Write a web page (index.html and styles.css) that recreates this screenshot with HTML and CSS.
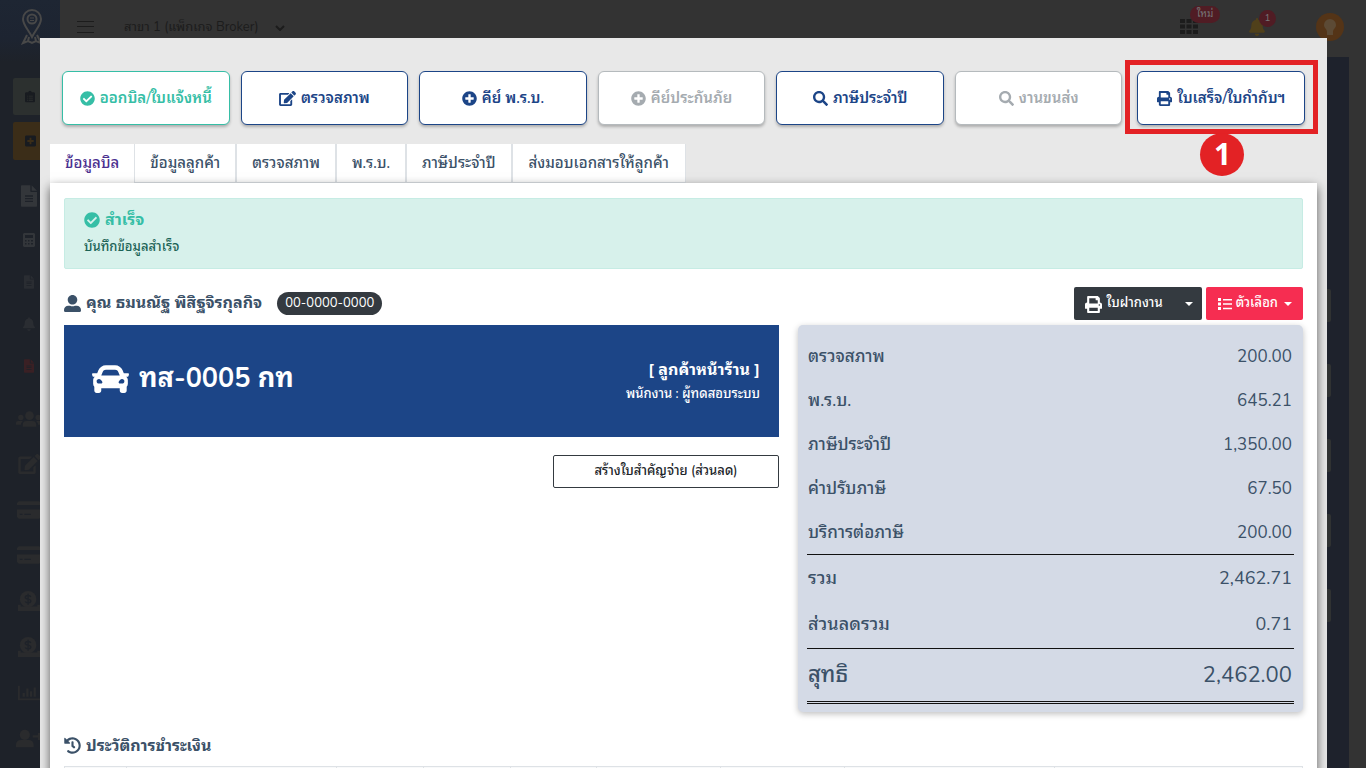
FILE: index.html
```html
<!DOCTYPE html>
<html lang="th">
<head>
<meta charset="utf-8">
<meta name="viewport" content="width=device-width, initial-scale=1">
<title>ข้อมูลบิล</title>
<link rel="stylesheet" href="styles.css">
</head>
<body>
<svg class="sprite" aria-hidden="true">
  <symbol id="check" viewBox="0 0 512 512"><path d="M504 256c0 136.967-111.033 248-248 248S8 392.967 8 256 119.033 8 256 8s248 111.033 248 248zM227.314 387.314l184-184c6.248-6.248 6.248-16.379 0-22.627l-22.627-22.627c-6.248-6.249-16.379-6.249-22.628 0L216 308.118l-70.059-70.059c-6.248-6.248-16.379-6.248-22.628 0l-22.627 22.627c-6.248 6.248-6.248 16.379 0 22.627l104 104c6.249 6.249 16.379 6.249 22.628.001z"/></symbol>
  <symbol id="plus" viewBox="0 0 512 512"><path d="M256 8C119 8 8 119 8 256s111 248 248 248 248-111 248-248S393 8 256 8zm144 276c0 6.600-5.400 12-12 12h-92v92c0 6.600-5.400 12-12 12h-56c-6.600 0-12-5.400-12-12v-92h-92c-6.600 0-12-5.400-12-12v-56c0-6.600 5.400-12 12-12h92v-92c0-6.600 5.400-12 12-12h56c6.600 0 12 5.400 12 12v92h92c6.600 0 12 5.400 12 12v56z"/></symbol>
  <symbol id="search" viewBox="0 0 512 512"><path d="M505 442.700L405.300 343c-4.500-4.500-10.600-7-17-7H372c27.600-35.300 44-79.700 44-128C416 93.100 322.900 0 208 0S0 93.100 0 208s93.100 208 208 208c48.300 0 92.700-16.400 128-44v16.300c0 6.400 2.500 12.500 7 17l99.700 99.700c9.400 9.400 24.600 9.400 33.900 0l28.300-28.300c9.400-9.400 9.400-24.600.1-34zM208 336c-70.700 0-128-57.200-128-128 0-70.700 57.200-128 128-128 70.700 0 128 57.200 128 128 0 70.700-57.200 128-128 128z"/></symbol>
  <symbol id="edit" viewBox="0 0 576 512"><path d="M402.600 83.200l90.200 90.200c3.800 3.800 3.800 10 0 13.800L274.400 405.600l-92.800 10.300c-12.400 1.400-22.900-9.100-21.500-21.500l10.300-92.800L388.800 83.200c3.800-3.800 10-3.800 13.800 0zm162-22.900l-48.800-48.800c-15.200-15.200-39.900-15.200-55.200 0l-35.400 35.400c-3.800 3.800-3.800 10 0 13.800l90.200 90.200c3.800 3.800 10 3.800 13.800 0l35.400-35.400c15.200-15.300 15.200-40 0-55.200zM384 346.200V448H64V128h229.800c3.200 0 6.200-1.300 8.500-3.500l40-40c7.600-7.600 2.200-20.500-8.500-20.500H48C21.500 64 0 85.500 0 112v352c0 26.500 21.500 48 48 48h352c26.500 0 48-21.500 48-48V306.200c0-10.700-12.900-16-20.500-8.500l-40 40c-2.200 2.300-3.500 5.300-3.500 8.500z"/></symbol>
  <symbol id="print" viewBox="0 0 512 512"><path d="M448 192V77.250c0-8.490-3.370-16.620-9.370-22.630L393.370 9.370c-6-6-14.140-9.370-22.630-9.370H96C78.330 0 64 14.330 64 32v160c-35.350 0-64 28.650-64 64v112c0 8.840 7.160 16 16 16h48v96c0 17.670 14.330 32 32 32h320c17.670 0 32-14.330 32-32v-96h48c8.840 0 16-7.160 16-16V256c0-35.350-28.650-64-64-64zm-64 256H128v-96h256v96zm0-224H128V64h192v48c0 8.840 7.160 16 16 16h48v96zm48 72c-13.250 0-24-10.750-24-24 0-13.260 10.750-24 24-24s24 10.740 24 24c0 13.250-10.750 24-24 24z"/></symbol>
  <symbol id="user" viewBox="0 0 512 512"><path d="M256 288c79.500 0 144-64.500 144-144S335.500 0 256 0 112 64.500 112 144s64.500 144 144 144zm128 32h-55.100c-22.200 10.200-46.900 16-72.900 16s-50.600-5.800-72.900-16H128C57.300 320 0 377.300 0 448v16c0 26.500 21.500 48 48 48h416c26.500 0 48-21.500 48-48v-16c0-70.700-57.300-128-128-128z"/></symbol>
  <symbol id="car" viewBox="0 64 512 384"><path d="M499.990 176h-59.870l-16.640-41.600C406.380 91.630 365.570 64 319.500 64h-127c-46.060 0-86.880 27.630-103.990 70.400L71.870 176H12.010C4.200 176-1.530 183.340.37 190.910l6 24C7.700 220.250 12.500 224 18.010 224h20.070C24.650 235.730 16 252.780 16 272v48c0 16.120 6.160 30.670 16 41.930V416c0 17.670 14.330 32 32 32h32c17.670 0 32-14.330 32-32v-32h256v32c0 17.670 14.330 32 32 32h32c17.670 0 32-14.330 32-32v-54.070c9.840-11.250 16-25.800 16-41.930v-48c0-19.220-8.650-36.270-22.070-48H494c5.510 0 10.310-3.750 11.640-9.090l6-24c1.890-7.570-3.840-14.910-11.650-14.910zm-352.060-17.830c7.290-18.220 24.940-30.170 44.570-30.170h127c19.630 0 37.280 11.950 44.570 30.170L384 208H128l19.930-49.830zM96 319.800c-19.200 0-32-12.760-32-31.900S76.800 256 96 256s48 28.710 48 47.850-28.800 15.950-48 15.950zm320 0c-19.200 0-48 3.190-48-15.950S396.800 256 416 256s32 12.760 32 31.900-12.800 31.900-32 31.900z"/></symbol>
  <symbol id="history" viewBox="0 0 512 512"><path d="M504 255.531c.253 136.640-111.180 248.372-247.820 248.468-59.015.042-113.223-20.530-155.822-54.911-11.077-8.940-11.905-25.541-1.839-35.607l11.267-11.267c8.609-8.609 22.353-9.551 31.891-1.984C173.062 425.135 212.781 440 256 440c101.705 0 184-82.311 184-184 0-101.705-82.311-184-184-184-48.814 0-93.149 18.969-126.068 49.932l50.754 50.754c10.080 10.080 2.941 27.314-11.313 27.314H24c-8.837 0-16-7.163-16-16V38.627c0-14.254 17.234-21.393 27.314-11.314l49.372 49.372C129.209 34.136 189.552 8 256 8c136.810 0 247.747 110.780 248 247.531zm-180.912 78.784l9.823-12.630c8.138-10.463 6.253-25.542-4.210-33.679L288 256.349V152c0-13.255-10.745-24-24-24h-16c-13.255 0-24 10.745-24 24v135.651l65.409 50.874c10.463 8.137 25.541 6.253 33.679-4.210z"/></symbol>
  <symbol id="bell" viewBox="0 0 448 512"><path d="M224 512c35.320 0 63.970-28.650 63.970-64H160.030c0 35.350 28.650 64 63.970 64zm215.390-149.710c-19.320-20.760-55.470-51.990-55.470-154.290 0-77.700-54.480-139.900-127.940-155.160V32c0-17.670-14.320-32-31.980-32s-31.980 14.330-31.980 32v20.840C118.560 68.100 64.080 130.300 64.080 208c0 102.300-36.150 133.530-55.470 154.290-6 6.450-8.660 14.160-8.610 21.710.11 16.400 12.980 32 32.100 32h383.800c19.120 0 32-15.600 32.100-32 .05-7.550-2.610-15.270-8.610-21.710z"/></symbol>
  <symbol id="list" viewBox="0 0 14 12"><path d="M0 0h3v3H0zM5 1h9v1.500H5zM0 4.500h3v3H0zM5 5.250h9v1.500H5zM0 9h3v3H0zM5 9.750h9v1.500H5z"/></symbol>
  <symbol id="file" viewBox="0 0 384 512"><path fill-rule="evenodd" d="M224 136V0H24C10.700 0 0 10.700 0 24v464c0 13.300 10.700 24 24 24h336c13.300 0 24-10.700 24-24V160H248c-13.200 0-24-10.800-24-24zM96 240h192v32H96zm0 64h192v32H96zm0 64h192v32H96zM256 0v128h128z"/></symbol>
  <symbol id="calc" viewBox="0 0 12 14"><path fill-rule="evenodd" d="M1 0h10l1 1v12l-1 1H1l-1-1V1zM2 2v3h8V2zM2 7v1.500h1.500V7zm3 0v1.500h1.500V7zm3 0v1.500h2V7zM2 10v1.500h1.500V10zm3 0v1.500h1.500V10zm3 0v1.500h2V10z"/></symbol>
  <symbol id="clipboard" viewBox="0 0 12 14"><path fill-rule="evenodd" d="M1 2h3a2 2 0 0 1 4 0h3l1 1v10l-1 1H1l-1-1V3zM2.500 6v1h1V6zm2 0v1h5V6zm-2 2.500v1h1v-1zm2 0v1h5v-1zm-2 2.500v1h1v-1zm2 0v1h5v-1z"/></symbol>
  <symbol id="plusbox" viewBox="0 0 12 12"><path fill-rule="evenodd" d="M1 0h10l1 1v10l-1 1H1l-1-1V1zM5 2.500V5H2.500v2H5v2.500h2V7h2.500V5H7V2.500z"/></symbol>
  <symbol id="users" viewBox="0 0 28 16"><circle cx="14" cy="4.500" r="4.500"/><circle cx="5" cy="6.500" r="2.800"/><circle cx="23" cy="6.500" r="2.800"/><path d="M7 16v-2a4 4 0 0 1 4-4h6a4 4 0 0 1 4 4v2zM0 14v-2a2 2 0 0 1 2-2h5q-2 2-2 4zM28 14v-2a2 2 0 0 0-2-2h-5q2 2 2 4z"/></symbol>
  <symbol id="card" viewBox="0 0 26 20"><path fill-rule="evenodd" d="M2 0h22l2 2v2H0V2zM0 9h26v8l-2 2H2l-2-2zM3 13.500V15h3v-1.500zm5 0V15h7v-1.500z"/></symbol>
  <symbol id="coin" viewBox="0 0 24 22"><circle cx="11" cy="9" r="9"/><path d="M0 15h3v2h18v-2h3v7H0z"/><path d="M14 6.500C13.500 5.300 12.300 5 11 5 9.300 5 8 5.800 8 7s1.300 1.700 3 2 3 .8 3 2-1.300 2-3 2-2.500-.5-3-1.500M11 3v12" fill="none" stroke="#1e2229" stroke-width="1.500"/></symbol>
  <symbol id="chart" viewBox="0 0 24 16"><path d="M0 0h2v14h22v2H0zM5 8h2.500v4H5zM9 3h2.500v9H9zM13 6h2.500v6H13zM17 2h2.500v10H17z"/></symbol>
  <symbol id="userplus" viewBox="0 0 28 19"><circle cx="9.500" cy="5.500" r="5.500"/><path d="M0 19v-3a5 5 0 0 1 5-5h9a5 5 0 0 1 5 5v3zM21 6h2.500V3.500H26V6h2v2.500h-2V11h-2.500V8.500H18V6z"/></symbol>
</svg>

<div class="app">
  <aside class="sidebar">
    <a class="logo" href="#" aria-label="หน้าแรก">
      <svg width="22" height="36" viewBox="0 0 22 36" fill="none" stroke="currentColor" stroke-width="2"><path d="M11 28C7 20 2 16 2 10a9 9 0 0 1 18 0c0 6-5 10-9 18z"/><circle cx="11" cy="10" r="4.500"/><path d="M9 9h4M9 11.500h4" stroke-width="1"/><path d="M6 26l-4 8 5-2 4 2 4-2 5 2-4-8M8 28l-1 4M14 28l1 4"/></svg>
    </a>
    <nav class="side-nav">
      <a class="side-box" href="#" aria-label="รายการ"><svg width="10" height="13"><use href="#clipboard"/></svg></a>
      <a class="side-box side-box-add" href="#" aria-label="เพิ่ม"><svg width="11" height="12"><use href="#plusbox"/></svg></a>
      <a class="side-item side-item-lg" href="#" aria-label="เอกสาร"><svg width="16" height="22"><use href="#file"/></svg></a>
      <a class="side-item" href="#" aria-label="คำนวณ"><svg width="12" height="14"><use href="#calc"/></svg></a>
      <a class="side-item side-dim" href="#" aria-label="บิล"><svg width="10" height="14"><use href="#file"/></svg></a>
      <a class="side-item side-dim" href="#" aria-label="แจ้งเตือน"><svg width="12" height="14"><use href="#bell"/></svg></a>
      <a class="side-item side-red" href="#" aria-label="ยกเลิก"><svg width="10" height="14"><use href="#file"/></svg></a>
      <div class="side-group">
        <a class="side-item" href="#" aria-label="ลูกค้า"><svg width="27" height="16"><use href="#users"/></svg></a>
        <a class="side-item" href="#" aria-label="แก้ไข"><svg width="23" height="20"><use href="#edit"/></svg></a>
        <a class="side-item" href="#" aria-label="บัตร"><svg width="24" height="19"><use href="#card"/></svg></a>
        <a class="side-item" href="#" aria-label="ชำระเงิน"><svg width="24" height="19"><use href="#card"/></svg></a>
        <a class="side-item" href="#" aria-label="รายรับ"><svg width="22" height="22"><use href="#coin"/></svg></a>
        <a class="side-item" href="#" aria-label="รายจ่าย"><svg width="22" height="22"><use href="#coin"/></svg></a>
        <a class="side-item" href="#" aria-label="รายงาน"><svg width="22" height="16"><use href="#chart"/></svg></a>
        <a class="side-item" href="#" aria-label="เพิ่มผู้ใช้"><svg width="26" height="19"><use href="#userplus"/></svg></a>
      </div>
    </nav>
  </aside>
  <div class="workspace">
    <header class="topbar">
      <button class="menu-btn" type="button" aria-label="เมนู"></button>
      <button class="branch" type="button">สาขา 1 (แพ็กเกจ Broker)
        <svg width="10" height="6" viewBox="0 0 10 6" fill="none" stroke="currentColor" stroke-width="2"><path d="M1 1l4 4 4-4"/></svg></button>
      <div class="top-tools">
        <button class="tool" type="button" aria-label="แอป"><svg width="18" height="16" viewBox="0 0 18 16"><path d="M0 0h5v4H0zM6.500 0h5v4h-5zM13 0h5v4h-5zM0 5.500h5v4H0zM6.500 5.500h5v4h-5zM13 5.500h5v4h-5zM0 11h5v4H0zM6.500 11h5v4h-5zM13 11h5v4h-5z"/></svg><span class="badge badge-new">ใหม่</span></button>
        <button class="tool tool-bell" type="button" aria-label="แจ้งเตือน"><svg width="16" height="18"><use href="#bell"/></svg><span class="badge">1</span></button>
        <button class="avatar" type="button" aria-label="บัญชี"><svg width="14" height="18" viewBox="0 0 14 18"><path d="M7 1a6 6 0 0 0-6 6c0 3 3 4 3 7v3h6v-3c0-3 3-4 3-7a6 6 0 0 0-6-6z"/></svg></button>
      </div>
    </header>
    <div class="canvas"><div class="canvas-tabs"><i></i><i></i><i></i><i></i><i></i></div></div>
  </div>
</div>

<main class="modal" role="dialog" aria-label="ข้อมูลบิล">
  <div class="actions">
    <button class="action action-done" type="button"><svg><use href="#check"/></svg>ออกบิล/ใบแจ้งหนี้</button>
    <button class="action" type="button"><svg class="wide"><use href="#edit"/></svg>ตรวจสภาพ</button>
    <button class="action" type="button"><svg><use href="#plus"/></svg>คีย์ พ.ร.บ.</button>
    <button class="action" type="button" disabled><svg><use href="#plus"/></svg>คีย์ประกันภัย</button>
    <button class="action" type="button"><svg><use href="#search"/></svg>ภาษีประจำปี</button>
    <button class="action" type="button" disabled><svg><use href="#search"/></svg>งานขนส่ง</button>
    <div class="marked">
      <button class="action" type="button"><svg><use href="#print"/></svg>ใบเสร็จ/ใบกำกับฯ</button>
      <span class="mark-frame"></span>
      <span class="mark-number">1</span>
    </div>
  </div>

  <div class="tabs" role="tablist">
    <button class="tab active" type="button" role="tab" aria-selected="true">ข้อมูลบิล</button>
    <button class="tab" type="button" role="tab">ข้อมูลลูกค้า</button>
    <button class="tab" type="button" role="tab">ตรวจสภาพ</button>
    <button class="tab" type="button" role="tab">พ.ร.บ.</button>
    <button class="tab" type="button" role="tab">ภาษีประจำปี</button>
    <button class="tab" type="button" role="tab">ส่งมอบเอกสารให้ลูกค้า</button>
  </div>

  <section class="panel">
    <div class="alert" role="status">
      <h2><svg width="16" height="16"><use href="#check"/></svg>สำเร็จ</h2>
      <p>บันทึกข้อมูลสำเร็จ</p>
    </div>

    <div class="customer">
      <h3><svg width="17" height="17"><use href="#user"/></svg>คุณ ธมนณัฐ พิสิฐจิรกุลกิจ</h3>
      <span class="phone">00-0000-0000</span>
      <div class="customer-tools">
        <button class="tool-btn" type="button"><svg width="17" height="17"><use href="#print"/></svg>ใบฝากงาน<i class="caret"></i></button>
        <button class="tool-btn tool-btn-red" type="button"><svg width="14" height="12"><use href="#list"/></svg>ตัวเลือก<i class="caret"></i></button>
      </div>
    </div>

    <div class="columns">
      <div class="left">
        <div class="car-card">
          <div class="plate"><svg width="37" height="28"><use href="#car"/></svg>ทส-0005 กท</div>
          <div class="staff"><strong>[ ลูกค้าหน้าร้าน ]</strong><span>พนักงาน : ผู้ทดสอบระบบ</span></div>
        </div>
        <button class="voucher" type="button">สร้างใบสำคัญจ่าย (ส่วนลด)</button>
      </div>
      <div class="summary">
        <table>
          <tbody class="items">
            <tr><th scope="row">ตรวจสภาพ</th><td>200.00</td></tr>
            <tr><th scope="row">พ.ร.บ.</th><td>645.21</td></tr>
            <tr><th scope="row">ภาษีประจำปี</th><td>1,350.00</td></tr>
            <tr><th scope="row">ค่าปรับภาษี</th><td>67.50</td></tr>
            <tr><th scope="row">บริการต่อภาษี</th><td>200.00</td></tr>
          </tbody>
          <tbody class="totals">
            <tr><th scope="row">รวม</th><td>2,462.71</td></tr>
            <tr><th scope="row">ส่วนลดรวม</th><td>0.71</td></tr>
          </tbody>
          <tfoot>
            <tr><th scope="row">สุทธิ</th><td>2,462.00</td></tr>
          </tfoot>
        </table>
      </div>
    </div>

    <h3 class="history"><svg width="17" height="17"><use href="#history"/></svg>ประวัติการชำระเงิน</h3>
    <table class="payments">
      <colgroup><col class="w-5"><col class="w-17"><col class="w-7"><col class="w-7"><col class="w-7"><col class="w-10"><col class="w-10"><col class="w-17"><col></colgroup>
      <tbody><tr><td></td><td></td><td></td><td></td><td></td><td></td><td></td><td></td><td></td></tr></tbody>
    </table>
  </section>
</main>
</body>
</html>
```
FILE: styles.css
```css
* { box-sizing: border-box; }
body {
  margin: 0;
  height: 100vh;
  overflow: hidden;
  position: relative;
  font-family: "Nunito", "Noto Sans", "Noto Sans Thai Looped", "Sarabun", "Loma", sans-serif;
  font-size: 15px;
  line-height: 1.5;
  color: #3b5168;
  background: #333;
}
button { font: inherit; color: inherit; background: none; border: 0; padding: 0; margin: 0; }
h2, h3, p { margin: 0; }
svg { fill: currentColor; flex: none; }
.sprite { position: absolute; width: 0; height: 0; }

/* dimmed application behind the dialog */
.app { display: flex; height: 100%; overflow: hidden; }
.sidebar { width: 60px; flex: none; background: linear-gradient(#1e2633 0, #1d2431 38px, #1e2229 62px); }
.logo { display: flex; justify-content: center; height: 78px; padding: 9px 0 0 4px; color: #484848; }
.logo svg { fill: none; }
.side-nav { display: flex; flex-direction: column; }
.side-box { display: flex; align-items: center; height: 37px; margin: 0 0 7px 13px; padding-left: 12px; background: #2c302f; color: #181b20; border-radius: 2px; }
.side-box-add { background: #3b2d18; height: 38px; margin-bottom: 13px; }
.side-item { display: flex; align-items: center; justify-content: center; width: 58px; height: 42px; color: #33363a; }
.side-item-lg { height: 46px; }
.side-dim { color: #2a2d32; }
.side-red { color: #3a2024; }
.side-group { display: grid; grid-auto-rows: 1fr; height: 374px; padding-top: 9px; }
.side-group .side-item { height: auto; color: #2a2b2d; }
.workspace { flex: 1; display: flex; flex-direction: column; }
.topbar { display: flex; align-items: center; height: 57px; padding: 0 22px 4px 17px; background: #333; color: #1c1c1c; }
.menu-btn { width: 17px; height: 12px; border: solid #1c1c1c; border-width: 1px 0; background: linear-gradient(#1c1c1c, #1c1c1c) center / 100% 1px no-repeat; }
.branch { display: flex; align-items: center; gap: 16px; margin-left: 30px; padding-top: 2px; font-size: 13px; }
.branch svg { fill: none; }
.top-tools { display: flex; align-items: center; gap: 51px; margin-left: auto; }
.tool { display: flex; position: relative; }
.tool-bell { color: #50401a; }
.badge { position: absolute; left: 10px; top: -13px; height: 17px; min-width: 17px; border-radius: 9px; background: #501c24; color: #777; font-size: 10px; line-height: 17px; text-align: center; }
.tool-bell .badge { top: -8px; }
.badge-new { width: 30px; }
.avatar { display: flex; align-items: center; justify-content: center; width: 28px; height: 28px; border-radius: 50%; background: #543417; color: #5c4a35; }
.canvas { flex: 1; margin-right: 17px; background: #1e222c; display: flex; justify-content: flex-end; }
.canvas-tabs { display: flex; flex-direction: column; gap: 42px; padding: 232px 18px 0 0; }
.canvas-tabs i { width: 20px; height: 33px; background: #303232; border-radius: 2px; }

/* dialog */
.modal {
  position: absolute;
  inset: 38px 39px 0 40px;
  display: flex;
  flex-direction: column;
  padding: 33px 10px 0;
  background: #e8e8e8;
  overflow: hidden;
}
.actions { display: flex; gap: 11px; padding: 0 12px; }
.action {
  display: flex; align-items: center; justify-content: center; gap: 5px;
  flex: 1 1 10%; min-width: 0; height: 54px;
  background: #fff; border: 1px solid #1c4587; border-radius: 6px;
  color: #1c4587; font-weight: 600; font-size: 15px; white-space: nowrap;
  box-shadow: 0 2px 3px rgba(0, 0, 0, .25);
}
.action svg { width: 15px; height: 15px; }
.action svg.wide { width: 17px; }
.action-done { color: #36bea6; border-color: #36bea6; }
.action:disabled { color: #a5abb0; border-color: #b5babd; }
.marked { position: relative; flex: 1 1 10%; min-width: 0; margin-left: 4px; }
.marked .action { width: 100%; }
.mark-frame { position: absolute; inset: -11px -13px -9px -12px; border: 5px solid #e32225; pointer-events: none; }
.mark-number {
  position: absolute; left: 63px; top: 62px; width: 44px; height: 43px;
  border-radius: 50%; background: #e32225; color: #fff;
  font: bold 30px/42px "Open Sans", sans-serif; text-align: center;
}

.tabs { display: flex; margin-top: 19px; }
.tab { height: 39px; padding: 0 15px; background: #fff; border: solid #dee2e6; border-width: 0 1px 1px; font-weight: 500; white-space: nowrap; }
.tab.active { padding: 0 14px; color: #4b3190; border-color: transparent; border-bottom: 0; }
.tab:last-child { padding: 0 16px; }
.panel { flex: 1; padding: 15px 14px 0; background: #fff; box-shadow: 0 4px 10px rgba(0, 0, 0, .6); position: relative; }

.alert { height: 71px; padding: 8px 19px; background: #d7f1eb; border: 1px solid #c6ece4; border-radius: 2px; }
.alert h2 { display: flex; align-items: center; gap: 5px; font-size: 16px; line-height: 26px; color: #36bea6; }
.alert p { font-size: 13px; font-weight: 500; line-height: 28px; color: #1c6356; }

.customer { display: flex; align-items: center; height: 56px; padding-top: 12px; }
h3 { display: flex; align-items: center; gap: 5px; font-size: 16px; line-height: 24px; }
.phone { margin-left: 15px; padding: 0 8px; border-radius: 12px; background: #343a40; color: #fff; font-size: 13px; line-height: 23px; }
.customer-tools { display: flex; gap: 4px; margin-left: auto; }
.tool-btn { display: flex; align-items: center; gap: 5px; height: 33px; padding: 2px 9px 0 11px; border-radius: 2px; background: #343a40; color: #fff; font-size: 13px; font-weight: 500; }
.tool-btn .caret { margin-left: 17px; }
.tool-btn-red { background: #f62d51; gap: 4px; padding: 2px 11px 0 12px; }
.tool-btn-red .caret { margin-left: 2px; }
.caret { border: solid transparent; border-width: 4px 4px 0; border-top-color: #fff; }

.columns { display: grid; grid-template-columns: 715fr 505fr; gap: 19px; align-items: start; }
.left { display: flex; flex-direction: column; align-items: flex-end; gap: 18px; }
.car-card { display: flex; align-items: center; justify-content: space-between; width: 100%; height: 112px; padding: 0 19px 4px 28px; background: #1c4587; color: #fff; }
.plate { display: flex; align-items: center; gap: 10px; font-size: 27px; font-weight: 700; }
.staff { display: flex; flex-direction: column; align-items: flex-end; padding-top: 5px; font-size: 13px; font-weight: 500; line-height: 24px; }
.staff strong { font-size: 16px; }
.voucher { width: 226px; height: 33px; padding-top: 1px; border: 1px solid #343a40; border-radius: 2px; color: #212529; font-size: 13px; font-weight: 500; }

.summary { padding: 9px 9px 8px; background: #d4dae6; border-radius: 5px; box-shadow: 0 2px 6px rgba(0, 0, 0, .25); }
.summary table { width: 100%; border-collapse: collapse; font-size: 17px; line-height: 24px; }
.summary th { padding: 0 1px; font-weight: 500; text-align: left; }
.summary td { padding: 0 2px; text-align: right; }
.summary tr { height: 44px; }
.summary .items th, .summary .items td { padding-top: 2px; }
.summary .totals tr { height: 47px; font-size: 18px; }
.summary tfoot tr { height: 54px; font-size: 22px; }
.summary .totals { border: solid #111; border-width: 1px 0; }
.summary tfoot { border-bottom: 3px double #111; }

.history { margin-top: 22px; }
.payments { width: 100%; height: 40px; margin-top: 8px; border-collapse: collapse; table-layout: fixed; }
.payments td { border: 1px solid #dee2e6; background: #f8f9fa; }
.w-5 { width: 5%; }
.w-7 { width: 7%; }
.w-10 { width: 10%; }
.w-17 { width: 17%; }
```
